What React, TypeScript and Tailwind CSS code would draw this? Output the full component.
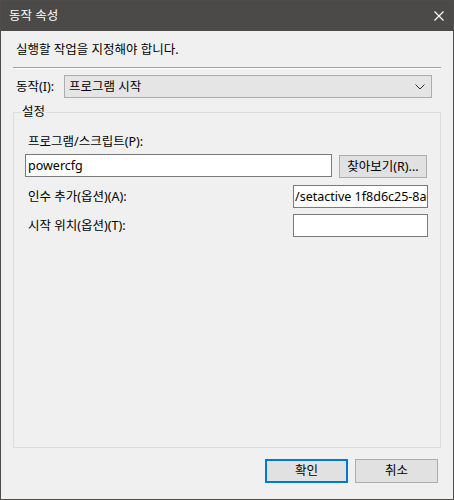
import React from 'react';

// 작업 스케줄러 "동작 속성" 대화상자
export default function App() {
  return (
    <div className="w-[454px] h-[500px] border border-[#4f4d4b] bg-[#f0f0f0] flex flex-col text-[12.5px] leading-[16px] text-black font-['Noto_Sans','Noto_Sans_CJK_KR',sans-serif]">
      <div className="h-[30px] shrink-0 bg-[#4b4a48] text-white flex items-center justify-between pl-[8px] pr-[9px]">
        <span>동작 속성</span>
        <svg width="10" height="10" viewBox="0 0 10 10" fill="none" stroke="white" strokeWidth="1.2">
          <path d="M0.5 0.5 L9.5 9.5 M9.5 0.5 L0.5 9.5" />
        </svg>
      </div>

      <div className="flex-1 flex flex-col px-[12px]">
        <div className="mt-[11px] pl-[3px] h-[16px]">실행할 작업을 지정해야 합니다.</div>
        <div className="mt-[9px] h-[2px] border-t border-[#a0a0a0] border-b border-b-white" />

        <div className="mt-[6px] flex items-center h-[23px]">
          <span className="w-[51px] pl-[3px]">동작(I):</span>
          <div className="w-[368px] h-[23px] border border-[#adadad] bg-[#e5e5e5] flex items-center justify-between pl-[4px] pr-[6px]">
            <span>프로그램 시작</span>
            <svg width="10" height="6" viewBox="0 0 10 6" fill="none" stroke="#333" strokeWidth="1">
              <path d="M0.5 0.5 L5 5 L9.5 0.5" />
            </svg>
          </div>
        </div>

        <div className="relative mt-[14px] h-[336px] border border-[#dcdcdc]">
          <span className="absolute top-[-9px] left-[7px] px-[1px] bg-[#f0f0f0]">설정</span>

          <div className="mt-[21px] pl-[14px] h-[16px]">프로그램/스크립트(P):</div>
          <div className="mt-[4px] pl-[11px] flex items-start gap-[7px]">
            <div className="w-[307px] h-[23px] border border-[#7a7a7a] bg-white flex items-center pl-[2px]">powercfg</div>
            <div className="mt-[1px] w-[88px] h-[23px] border border-[#adadad] bg-[#e1e1e1] flex items-center justify-center">찾아보기(R)...</div>
          </div>

          <div className="mt-[7px] flex items-center h-[23px]">
            <span className="w-[279px] pl-[14px]">인수 추가(옵션)(A):</span>
            <div className="w-[135px] h-[23px] border border-[#7a7a7a] bg-white flex items-center pl-[1px] overflow-hidden whitespace-nowrap">/setactive 1f8d6c25-8a0c-4a9d-8c34</div>
          </div>

          <div className="mt-[6px] flex items-center h-[23px]">
            <span className="w-[279px] pl-[14px]">시작 위치(옵션)(T):</span>
            <div className="w-[135px] h-[23px] border border-[#7a7a7a] bg-white" />
          </div>
        </div>

        <div className="mt-[11px] flex justify-end gap-[7px] pr-[3px]">
          <div className="w-[83px] h-[24px] border-2 border-[#0078d7] bg-[#e1e1e1] flex items-center justify-center">확인</div>
          <div className="w-[83px] h-[24px] border border-[#adadad] bg-[#e1e1e1] flex items-center justify-center">취소</div>
        </div>
      </div>
    </div>
  );
}
